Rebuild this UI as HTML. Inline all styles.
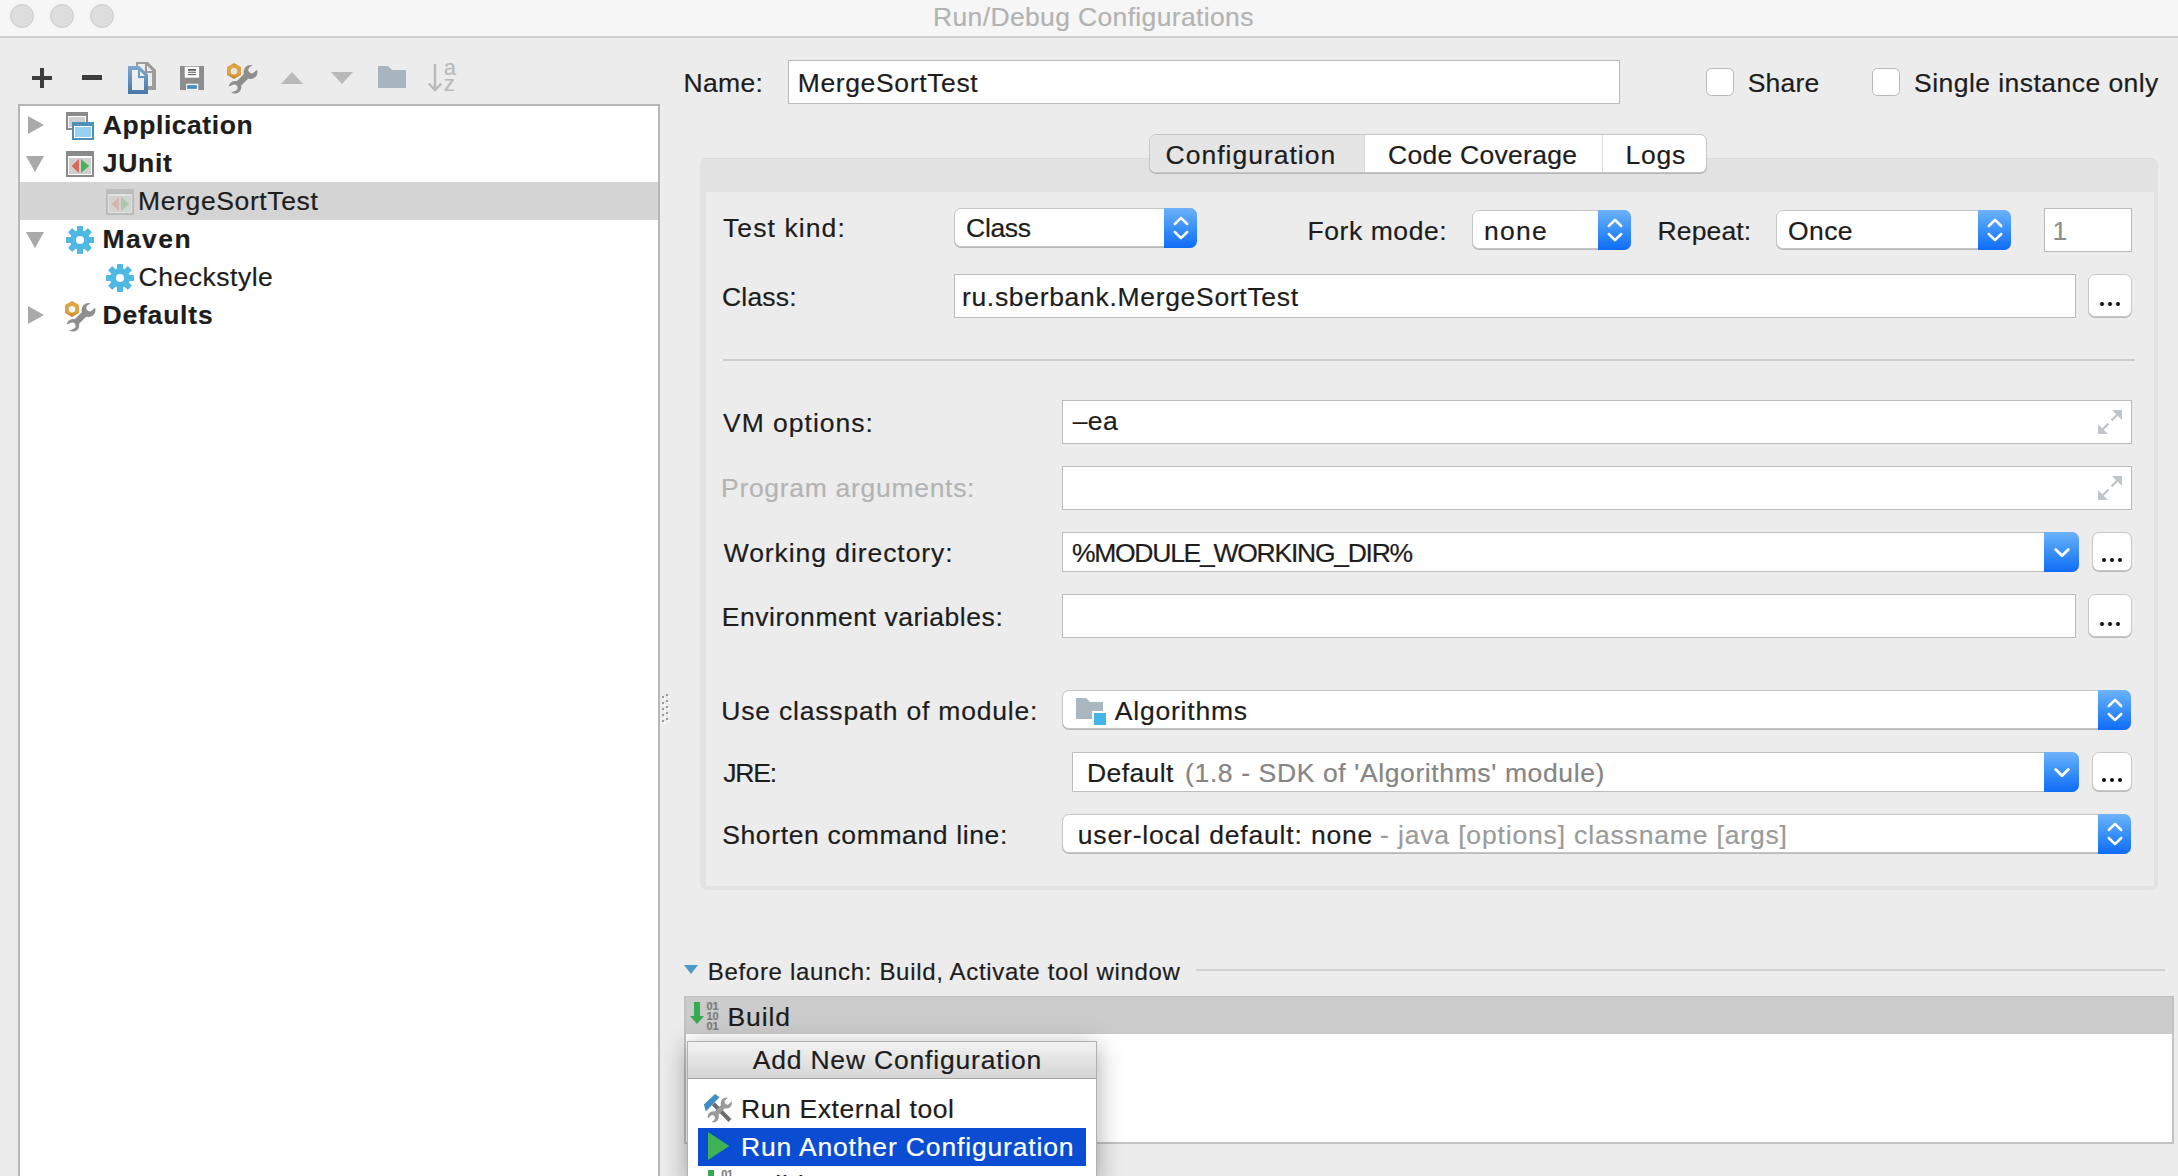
<!DOCTYPE html>
<html><head><meta charset="utf-8"><title>Run/Debug Configurations</title><style>
*{box-sizing:border-box}
html,body{margin:0;padding:0}
body{width:2178px;height:1176px;overflow:hidden;background:#ececec;font-family:"Liberation Sans",sans-serif;position:relative}
.a{position:absolute}
.t{position:absolute;white-space:pre;line-height:40px;height:40px;-webkit-text-stroke:0.2px currentColor}
.inp{position:absolute;background:#fff;border:1px solid #bbbbbb}
.cmb{position:absolute;background:#fff;border:1px solid #c6c6c6;border-radius:7px;box-shadow:0 1px 0 #b9b9b9}
.cbtn{position:absolute;right:-1px;top:-1px;bottom:-2px;border-radius:0 7px 7px 0;background:linear-gradient(#6db3fb,#3d94f9 45%,#0f6cf6)}
.btn{position:absolute;background:#fff;border:1px solid #c8c8c8;border-radius:7px;box-shadow:0 1px 0 #bbbbbb}
.chk{position:absolute;width:28px;height:28px;background:#fff;border:1px solid #b7b7b7;border-radius:5.500px}
svg{position:absolute;overflow:visible}
#root{position:absolute;left:0;top:0;width:2178px;height:1176px;overflow:hidden;background:#ececec}
</style></head><body>
<div id="root">
<div class="a" style="left:0;top:0;width:2178px;height:37px;background:#f6f6f6"></div>
<div class="a" style="left:0;top:36px;width:2178px;height:2px;background:#cfcfcf"></div>
<div class="a" style="left:10px;top:4px;width:24px;height:24px;border-radius:12px;background:#dddddd;border:1px solid #cdcdcd"></div>
<div class="a" style="left:50px;top:4px;width:24px;height:24px;border-radius:12px;background:#dddddd;border:1px solid #cdcdcd"></div>
<div class="a" style="left:90px;top:4px;width:24px;height:24px;border-radius:12px;background:#dddddd;border:1px solid #cdcdcd"></div>
<div class='t' style='left:933.00px;top:-3.0px;font-size:26.5px;font-weight:400;color:#b3b3b3;letter-spacing:0.354px;'>Run/Debug Configurations</div>
<svg style="left:32px;top:68px" width="20" height="20" viewBox="0 0 20 20"><path d="M8 0h4v8h8v4h-8v8H8v-8H0V8h8z" fill="#3c3c3c"/></svg>
<svg style="left:82px;top:75px" width="20" height="5" viewBox="0 0 20 5"><rect width="20" height="5" fill="#3c3c3c"/></svg>
<svg style="left:128px;top:62px" width="28" height="32" viewBox="0 0 28 32"><defs><linearGradient id="cg" x1="0" y1="0" x2="0" y2="1"><stop offset="0" stop-color="#7ea9ce"/><stop offset="1" stop-color="#4577a7"/></linearGradient></defs>
<path d="M8 0H20L28 8V28H8Z" fill="#9b9b9b"/><path d="M10 2H17V11H24V24H10Z" fill="#ececec"/><path d="M19 3.500L24.500 9H19Z" fill="#ececec"/>
<path d="M0 4H11.500L20 12.500V32H0Z" fill="url(#cg)"/><path d="M4 8H10V16H16V28H4Z" fill="#eeeeee"/><path d="M12 9L17 14H12Z" fill="#eeeeee"/></svg>
<svg style="left:180px;top:66px" width="24" height="24" viewBox="0 0 24 24"><rect width="24" height="24" fill="#8c8c8c"/><rect x="4.700" y="0.700" width="14.400" height="11" fill="#fbfbfb"/>
<rect x="8" y="3" width="8" height="1.700" fill="#555"/><rect x="8" y="5.700" width="8" height="1.100" fill="#666"/><rect x="8" y="8" width="8" height="1.100" fill="#666"/>
<rect x="6" y="17.700" width="12.300" height="6.300" fill="#efefef"/><rect x="7.100" y="19.200" width="9.700" height="3.600" fill="#3e8cc5"/></svg>
<svg style="left:226px;top:62px" width="32" height="32" viewBox="0 0 32 32"><defs><linearGradient id="ng1" x1="0" y1="0" x2="0" y2="1"><stop offset="0" stop-color="#c9913a"/><stop offset="0.150" stop-color="#dea545"/><stop offset="0.700" stop-color="#dba041"/><stop offset="1" stop-color="#b98428"/></linearGradient>
<mask id="wm1"><rect x="-2" y="-2" width="38" height="38" fill="#fff"/><g transform="translate(25.600 8) rotate(-40)" fill="#000"><rect x="0" y="-3.200" width="14" height="6.400"/><circle r="3.200"/></g><g transform="translate(8.400 25.800) rotate(158)" fill="#000"><rect x="0" y="-3.200" width="14" height="6.400"/><circle r="3.200"/></g></mask></defs>
<g mask="url(#wm1)" fill="#8e8e8e"><circle cx="24.500" cy="10" r="7"/><circle cx="9" cy="25.300" r="6.300"/><path d="M9 25.300L24.500 10" stroke="#8e8e8e" stroke-width="6.200"/></g>
<path d="M8 1L15 5V13L8 17L1 13V5Z" fill="url(#ng1)"/><circle cx="8" cy="9.200" r="3.300" fill="#e6e6e6"/></svg>
<svg style="left:281px;top:72px" width="22" height="12" viewBox="0 0 22 12"><path d="M0 12L11 0L22 12z" fill="#b9b9b9"/></svg>
<svg style="left:331px;top:72px" width="22" height="12" viewBox="0 0 22 12"><path d="M0 0L11 12L22 0z" fill="#b9b9b9"/></svg>
<svg style="left:378px;top:66px" width="28" height="22" viewBox="0 0 28 22"><path d="M0 0h10l4 4h14v18H0z" fill="#a7b5c1"/></svg>
<svg style="left:428px;top:64px" width="28" height="28" viewBox="0 0 28 28"><path d="M7 0v26M0.800 19.500l6.200 6.800l6.200 -6.800" fill="none" stroke="#bababa" stroke-width="2.400"/></svg>
<div class='t' style='left:443.80px;top:48.099999999999994px;font-size:22px;font-weight:400;color:#bababa;letter-spacing:-2.700px;'>a</div>
<div class='t' style='left:443.80px;top:64.1px;font-size:22px;font-weight:400;color:#bababa;letter-spacing:0.300px;'>z</div>
<div class="a" style="left:18px;top:104px;width:642px;height:1100px;background:#fff;border:2px solid #b7b7b7"></div>
<div class="a" style="left:20px;top:182px;width:638px;height:38px;background:#d4d4d4"></div>
<svg style="left:28px;top:116px" width="16" height="18" viewBox="0 0 16 18"><path d="M0 0L16 9L0 18z" fill="#a9a9a9"/></svg>
<svg style="left:26px;top:156px" width="18" height="16" viewBox="0 0 18 16"><path d="M0 0L18 0L9 16z" fill="#a9a9a9"/></svg>
<svg style="left:26px;top:232px" width="18" height="16" viewBox="0 0 18 16"><path d="M0 0L18 0L9 16z" fill="#a9a9a9"/></svg>
<svg style="left:28px;top:306px" width="16" height="18" viewBox="0 0 16 18"><path d="M0 0L16 9L0 18z" fill="#a9a9a9"/></svg>
<svg style="left:66px;top:112px" width="28" height="28" viewBox="0 0 28 28"><rect x="0" y="0" width="22" height="18" fill="#8a8a8a"/><rect x="2" y="4" width="18" height="12" fill="#fff"/><rect x="3" y="5" width="16" height="10" fill="#cfcfcf"/>
<rect x="6" y="10" width="22" height="18" fill="#4f90b8"/><rect x="8" y="14" width="18" height="12" fill="#fff"/><rect x="9" y="15" width="16" height="10" fill="#98d1f3"/></svg>
<svg style="left:66px;top:151px" width="28" height="26" viewBox="0 0 28 26"><rect x="0" y="0" width="28" height="26" fill="#8a8a8a"/><rect x="2" y="5" width="24" height="19" fill="#fff"/><rect x="3" y="7" width="22" height="16" fill="#cfcfcf"/>
<path d="M13 8L5.500 15L13 22z" fill="#d9685a"/><path d="M15 8L23 15L15 22z" fill="#45b25a"/></svg>
<svg style="left:106px;top:189px;opacity:.3" width="28" height="26" viewBox="0 0 28 26"><rect x="0" y="0" width="28" height="26" fill="#8a8a8a"/><rect x="2" y="5" width="24" height="19" fill="#fff"/><rect x="3" y="7" width="22" height="16" fill="#cfcfcf"/>
<path d="M13 8L5.500 15L13 22z" fill="#d9685a"/><path d="M15 8L23 15L15 22z" fill="#45b25a"/></svg>
<svg style="left:66px;top:226px" width="28" height="28" viewBox="0 0 28 28"><g fill="#4fb8e4"><circle cx="14" cy="14" r="10"/><rect x="11" y="0" width="6" height="28" rx="1" transform="rotate(0 14 14)"/><rect x="11" y="0" width="6" height="28" rx="1" transform="rotate(45 14 14)"/><rect x="11" y="0" width="6" height="28" rx="1" transform="rotate(90 14 14)"/><rect x="11" y="0" width="6" height="28" rx="1" transform="rotate(135 14 14)"/></g><circle cx="14" cy="14" r="4" fill="#fff"/></svg>
<svg style="left:106px;top:264px" width="28" height="28" viewBox="0 0 28 28"><g fill="#4fb8e4"><circle cx="14" cy="14" r="10"/><rect x="11" y="0" width="6" height="28" rx="1" transform="rotate(0 14 14)"/><rect x="11" y="0" width="6" height="28" rx="1" transform="rotate(45 14 14)"/><rect x="11" y="0" width="6" height="28" rx="1" transform="rotate(90 14 14)"/><rect x="11" y="0" width="6" height="28" rx="1" transform="rotate(135 14 14)"/></g><circle cx="14" cy="14" r="4" fill="#fff"/></svg>
<svg style="left:64px;top:300px" width="32" height="32" viewBox="0 0 32 32"><defs><linearGradient id="ng2" x1="0" y1="0" x2="0" y2="1"><stop offset="0" stop-color="#c9913a"/><stop offset="0.150" stop-color="#dea545"/><stop offset="0.700" stop-color="#dba041"/><stop offset="1" stop-color="#b98428"/></linearGradient>
<mask id="wm2"><rect x="-2" y="-2" width="38" height="38" fill="#fff"/><g transform="translate(25.600 8) rotate(-40)" fill="#000"><rect x="0" y="-3.200" width="14" height="6.400"/><circle r="3.200"/></g><g transform="translate(8.400 25.800) rotate(158)" fill="#000"><rect x="0" y="-3.200" width="14" height="6.400"/><circle r="3.200"/></g></mask></defs>
<g mask="url(#wm2)" fill="#8e8e8e"><circle cx="24.500" cy="10" r="7"/><circle cx="9" cy="25.300" r="6.300"/><path d="M9 25.300L24.500 10" stroke="#8e8e8e" stroke-width="6.200"/></g>
<path d="M8 1L15 5V13L8 17L1 13V5Z" fill="url(#ng2)"/><circle cx="8" cy="9.200" r="3.300" fill="#f4f4f4"/></svg>
<div class='t' style='left:102.80px;top:104.9px;font-size:26.5px;font-weight:700;color:#1d1d1d;letter-spacing:0.551px;'>Application</div>
<div class='t' style='left:102.80px;top:142.8px;font-size:26.5px;font-weight:700;color:#1d1d1d;letter-spacing:0.694px;'>JUnit</div>
<div class='t' style='left:138.10px;top:181.0px;font-size:26.5px;font-weight:400;color:#1d1d1d;letter-spacing:0.612px;'>MergeSortTest</div>
<div class='t' style='left:102.50px;top:218.9px;font-size:26.5px;font-weight:700;color:#1d1d1d;letter-spacing:1.403px;'>Maven</div>
<div class='t' style='left:138.50px;top:256.8px;font-size:26.5px;font-weight:400;color:#1d1d1d;letter-spacing:0.526px;'>Checkstyle</div>
<div class='t' style='left:102.50px;top:294.7px;font-size:26.5px;font-weight:700;color:#1d1d1d;letter-spacing:0.798px;'>Defaults</div>
<svg style="left:662px;top:694px" width="8" height="30" viewBox="0 0 8 30"><rect x="0" y="2" width="2" height="2" fill="#9c9c9c"/><rect x="2" y="4" width="2" height="2" fill="#f9f9f9"/><rect x="4" y="0" width="2" height="2" fill="#9c9c9c"/><rect x="6" y="2" width="2" height="2" fill="#f9f9f9"/><rect x="0" y="8" width="2" height="2" fill="#9c9c9c"/><rect x="2" y="10" width="2" height="2" fill="#f9f9f9"/><rect x="4" y="6" width="2" height="2" fill="#9c9c9c"/><rect x="6" y="8" width="2" height="2" fill="#f9f9f9"/><rect x="0" y="14" width="2" height="2" fill="#9c9c9c"/><rect x="2" y="16" width="2" height="2" fill="#f9f9f9"/><rect x="4" y="12" width="2" height="2" fill="#9c9c9c"/><rect x="6" y="14" width="2" height="2" fill="#f9f9f9"/><rect x="0" y="20" width="2" height="2" fill="#9c9c9c"/><rect x="2" y="22" width="2" height="2" fill="#f9f9f9"/><rect x="4" y="18" width="2" height="2" fill="#9c9c9c"/><rect x="6" y="20" width="2" height="2" fill="#f9f9f9"/><rect x="0" y="26" width="2" height="2" fill="#9c9c9c"/><rect x="2" y="28" width="2" height="2" fill="#f9f9f9"/><rect x="4" y="24" width="2" height="2" fill="#9c9c9c"/><rect x="6" y="26" width="2" height="2" fill="#f9f9f9"/></svg>
<div class='t' style='left:683.60px;top:62.5px;font-size:26.5px;font-weight:400;color:#1d1d1d;letter-spacing:0.303px;'>Name:</div>
<div class="inp" style="left:788px;top:60px;width:832px;height:44px"></div>
<div class='t' style='left:797.70px;top:62.5px;font-size:26.5px;font-weight:400;color:#1d1d1d;letter-spacing:0.637px;'>MergeSortTest</div>
<div class="chk" style="left:1706px;top:68px"></div>
<div class='t' style='left:1747.70px;top:62.599999999999994px;font-size:26.5px;font-weight:400;color:#1d1d1d;letter-spacing:0.206px;'>Share</div>
<div class="chk" style="left:1872px;top:68px"></div>
<div class='t' style='left:1914.10px;top:62.599999999999994px;font-size:26.5px;font-weight:400;color:#1d1d1d;letter-spacing:0.450px;'>Single instance only</div>
<div class="a" style="left:700px;top:158px;width:1458px;height:732px;background:#e2e2e2;border-top:1px solid #dbdbdb;border-radius:7px"></div>
<div class="a" style="left:706px;top:192px;width:1448px;height:694px;background:#ececec"></div>
<div class="a" style="left:1149px;top:134px;width:558px;height:39px;background:#fff;border:1px solid #c6c6c6;border-radius:7px;box-shadow:0 1px 0 #b6b6b6"></div>
<div class="a" style="left:1150px;top:135px;width:214px;height:37px;background:#e5e5e5;border-radius:6px 0 0 6px"></div>
<div class="a" style="left:1364px;top:135px;width:1px;height:37px;background:#dadada"></div>
<div class="a" style="left:1602px;top:135px;width:1px;height:37px;background:#dcdcdc"></div>
<div class='t' style='left:1165.60px;top:135.2px;font-size:26.5px;font-weight:400;color:#1d1d1d;letter-spacing:0.992px;'>Configuration</div>
<div class='t' style='left:1388.00px;top:135.2px;font-size:26.5px;font-weight:400;color:#1d1d1d;letter-spacing:0.277px;'>Code Coverage</div>
<div class='t' style='left:1625.40px;top:135.2px;font-size:26.5px;font-weight:400;color:#1d1d1d;letter-spacing:0.829px;'>Logs</div>
<div class='t' style='left:723.00px;top:208.2px;font-size:26.5px;font-weight:400;color:#1d1d1d;letter-spacing:1.091px;'>Test kind:</div>
<div class="cmb" style="left:954px;top:208px;width:243px;height:39px"><div class="cbtn" style="width:33px"><svg style="left:5.5px;top:-1.0px" width="22" height="42" viewBox="0 0 22 42"><path d="M4.800 17L11 10.800L17.200 17M4.800 25L11 31.200L17.200 25" fill="none" stroke="#fff" stroke-width="2.500" stroke-linecap="round" stroke-linejoin="round"/></svg></div></div>
<div class='t' style='left:966.10px;top:208.2px;font-size:26.5px;font-weight:400;color:#1d1d1d;letter-spacing:-0.353px;'>Class</div>
<div class='t' style='left:1307.50px;top:211.0px;font-size:26.5px;font-weight:400;color:#1d1d1d;letter-spacing:0.572px;'>Fork mode:</div>
<div class="cmb" style="left:1472px;top:210px;width:159px;height:39px"><div class="cbtn" style="width:33px"><svg style="left:5.5px;top:-1.0px" width="22" height="42" viewBox="0 0 22 42"><path d="M4.800 17L11 10.800L17.200 17M4.800 25L11 31.200L17.200 25" fill="none" stroke="#fff" stroke-width="2.500" stroke-linecap="round" stroke-linejoin="round"/></svg></div></div>
<div class='t' style='left:1484.10px;top:211.0px;font-size:26.5px;font-weight:400;color:#1d1d1d;letter-spacing:1.229px;'>none</div>
<div class='t' style='left:1657.60px;top:211.0px;font-size:26.5px;font-weight:400;color:#1d1d1d;letter-spacing:0.108px;'>Repeat:</div>
<div class="cmb" style="left:1776px;top:210px;width:235px;height:39px"><div class="cbtn" style="width:33px"><svg style="left:5.5px;top:-1.0px" width="22" height="42" viewBox="0 0 22 42"><path d="M4.800 17L11 10.800L17.200 17M4.800 25L11 31.200L17.200 25" fill="none" stroke="#fff" stroke-width="2.500" stroke-linecap="round" stroke-linejoin="round"/></svg></div></div>
<div class='t' style='left:1788.00px;top:210.6px;font-size:26.5px;font-weight:400;color:#1d1d1d;letter-spacing:0.400px;'>Once</div>
<div class="inp" style="left:2044px;top:208px;width:88px;height:44px"></div>
<div class='t' style='left:2052.40px;top:210.6px;font-size:26.5px;font-weight:400;color:#8e8e8e;letter-spacing:-2.400px;'>1</div>
<div class='t' style='left:722.00px;top:277.0px;font-size:26.5px;font-weight:400;color:#1d1d1d;letter-spacing:0.187px;'>Class:</div>
<div class="inp" style="left:954px;top:274px;width:1122px;height:44px"></div>
<div class='t' style='left:961.90px;top:277.0px;font-size:26.5px;font-weight:400;color:#1d1d1d;letter-spacing:0.689px;'>ru.sberbank.MergeSortTest</div>
<div class="btn" style="left:2088px;top:274px;width:44px;height:43px"></div><div class="a" style="left:2099.95px;top:301.85px;width:3.9px;height:3.9px;border-radius:1.95px;background:#111"></div><div class="a" style="left:2108.05px;top:301.85px;width:3.9px;height:3.9px;border-radius:1.95px;background:#111"></div><div class="a" style="left:2116.15px;top:301.85px;width:3.9px;height:3.9px;border-radius:1.95px;background:#111"></div>
<div class="a" style="left:723px;top:359px;width:1412px;height:2px;background:#cdcdcd"></div>
<div class='t' style='left:723.00px;top:402.6px;font-size:26.5px;font-weight:400;color:#1d1d1d;letter-spacing:1.004px;'>VM options:</div>
<div class="inp" style="left:1062px;top:400px;width:1070px;height:44px"></div>
<div class='t' style='left:1072.70px;top:401.0px;font-size:26.5px;font-weight:400;color:#1d1d1d;letter-spacing:0.362px;'>&#8211;ea</div>
<svg style="left:2098px;top:410px" width="24" height="24" viewBox="0 0 24 24"><path d="M13.600 10.400L20 4M10.400 13.600L4 20" fill="none" stroke="#c0c5c9" stroke-width="2.300"/><path d="M14 0h10v10zM0 14v10h10z" fill="#c0c5c9"/></svg>
<div class='t' style='left:721.00px;top:468.2px;font-size:26.5px;font-weight:400;color:#b4b4b4;letter-spacing:0.701px;'>Program arguments:</div>
<div class="inp" style="left:1062px;top:466px;width:1070px;height:44px"></div>
<svg style="left:2098px;top:476px" width="24" height="24" viewBox="0 0 24 24"><path d="M13.600 10.400L20 4M10.400 13.600L4 20" fill="none" stroke="#c0c5c9" stroke-width="2.300"/><path d="M14 0h10v10zM0 14v10h10z" fill="#c0c5c9"/></svg>
<div class='t' style='left:723.70px;top:532.5px;font-size:26.5px;font-weight:400;color:#1d1d1d;letter-spacing:0.936px;'>Working directory:</div>
<div class="cmb" style="left:1062px;top:532px;width:1017px;height:40px;border-radius:0 7px 7px 0;box-shadow:none;border-color:#bdbdbd"><div class="cbtn" style="width:35px;bottom:-1px"><svg style="left:-0.5px;top:0.0px" width="36" height="40" viewBox="0 0 36 40"><path d="M11.700 17.400L18 23.700L24.300 17.400" fill="none" stroke="#fff" stroke-width="2.800" stroke-linecap="round" stroke-linejoin="round"/></svg></div></div>
<div class='t' style='left:1071.90px;top:532.5px;font-size:26.5px;font-weight:400;color:#1d1d1d;letter-spacing:-1.258px;'>%MODULE_WORKING_DIR%</div>
<div class="btn" style="left:2092px;top:532px;width:40px;height:39px"></div><div class="a" style="left:2101.95px;top:557.85px;width:3.9px;height:3.9px;border-radius:1.95px;background:#111"></div><div class="a" style="left:2110.05px;top:557.85px;width:3.9px;height:3.9px;border-radius:1.95px;background:#111"></div><div class="a" style="left:2118.15px;top:557.85px;width:3.9px;height:3.9px;border-radius:1.95px;background:#111"></div>
<div class='t' style='left:721.70px;top:596.9px;font-size:26.5px;font-weight:400;color:#1d1d1d;letter-spacing:0.549px;'>Environment variables:</div>
<div class="inp" style="left:1062px;top:594px;width:1014px;height:44px"></div>
<div class="btn" style="left:2088px;top:594px;width:44px;height:43px"></div><div class="a" style="left:2099.95px;top:621.85px;width:3.9px;height:3.9px;border-radius:1.95px;background:#111"></div><div class="a" style="left:2108.05px;top:621.85px;width:3.9px;height:3.9px;border-radius:1.95px;background:#111"></div><div class="a" style="left:2116.15px;top:621.85px;width:3.9px;height:3.9px;border-radius:1.95px;background:#111"></div>
<div class='t' style='left:721.20px;top:690.7px;font-size:26.5px;font-weight:400;color:#1d1d1d;letter-spacing:0.814px;'>Use classpath of module:</div>
<div class="cmb" style="left:1062px;top:690px;width:1069px;height:39px"><div class="cbtn" style="width:33px"><svg style="left:5.5px;top:-1.0px" width="22" height="42" viewBox="0 0 22 42"><path d="M4.800 17L11 10.800L17.200 17M4.800 25L11 31.200L17.200 25" fill="none" stroke="#fff" stroke-width="2.500" stroke-linecap="round" stroke-linejoin="round"/></svg></div></div>
<svg style="left:1076px;top:698px" width="30" height="28" viewBox="0 0 30 28"><path d="M0 0h10l4 4h13v17H0z" fill="#a9b7c2"/><rect x="16" y="13" width="14" height="15" fill="#fff"/><rect x="18" y="15" width="12" height="12" fill="#45b4e6"/></svg>
<div class='t' style='left:1114.80px;top:690.7px;font-size:26.5px;font-weight:400;color:#1d1d1d;letter-spacing:0.786px;'>Algorithms</div>
<div class='t' style='left:723.20px;top:753.0px;font-size:26.5px;font-weight:400;color:#1d1d1d;letter-spacing:-1.188px;'>JRE:</div>
<div class="cmb" style="left:1072px;top:752px;width:1007px;height:40px;border-radius:0 7px 7px 0;box-shadow:none;border-color:#bdbdbd"><div class="cbtn" style="width:35px;bottom:-1px"><svg style="left:-0.5px;top:0.0px" width="36" height="40" viewBox="0 0 36 40"><path d="M11.700 17.400L18 23.700L24.300 17.400" fill="none" stroke="#fff" stroke-width="2.800" stroke-linecap="round" stroke-linejoin="round"/></svg></div></div>
<div class='t' style='left:1087.10px;top:753.0px;font-size:26.5px;font-weight:400;color:#1d1d1d;letter-spacing:0.383px;'>Default</div>
<div class='t' style='left:1185.10px;top:753.0px;font-size:26.5px;font-weight:400;color:#858585;letter-spacing:0.615px;'>(1.8 - SDK of 'Algorithms' module)</div>
<div class="btn" style="left:2092px;top:752px;width:40px;height:39px"></div><div class="a" style="left:2101.95px;top:777.85px;width:3.9px;height:3.9px;border-radius:1.95px;background:#111"></div><div class="a" style="left:2110.05px;top:777.85px;width:3.9px;height:3.9px;border-radius:1.95px;background:#111"></div><div class="a" style="left:2118.15px;top:777.85px;width:3.9px;height:3.9px;border-radius:1.95px;background:#111"></div>
<div class='t' style='left:722.20px;top:814.6px;font-size:26.5px;font-weight:400;color:#1d1d1d;letter-spacing:0.633px;'>Shorten command line:</div>
<div class="cmb" style="left:1062px;top:814px;width:1069px;height:39px"><div class="cbtn" style="width:33px"><svg style="left:5.5px;top:-1.0px" width="22" height="42" viewBox="0 0 22 42"><path d="M4.800 17L11 10.800L17.200 17M4.800 25L11 31.200L17.200 25" fill="none" stroke="#fff" stroke-width="2.500" stroke-linecap="round" stroke-linejoin="round"/></svg></div></div>
<div class='t' style='left:1077.80px;top:814.6px;font-size:26.5px;font-weight:400;color:#1d1d1d;letter-spacing:0.829px;'>user-local default: none</div>
<div class='t' style='left:1380.10px;top:814.6px;font-size:26.5px;font-weight:400;color:#9b9b9b;letter-spacing:0.839px;'>- java [options] classname [args]</div>
<svg style="left:684px;top:965px" width="14" height="10" viewBox="0 0 14 10"><path d="M0 0h14L7 9z" fill="#4a9ac8"/></svg>
<div class='t' style='left:707.80px;top:952.0px;font-size:24px;font-weight:400;color:#1d1d1d;letter-spacing:0.679px;'>Before launch: Build, Activate tool window</div>
<div class="a" style="left:1196px;top:969px;width:969px;height:2px;background:#d2d2d2"></div>
<div class="a" style="left:684px;top:996px;width:1490px;height:148px;background:#fff;border:2px solid #c2c2c2"></div>
<div class="a" style="left:686px;top:997px;width:1486px;height:37px;background:#cbcbcb"></div>
<svg style="left:690px;top:1002px" width="14" height="22" viewBox="0 0 14 22"><path d="M4 0h6v14h4l-7 8l-7 -8h4z" fill="#34ab50"/></svg>
<div class='t' style='left:706.60px;top:986.2px;font-size:11px;font-weight:700;color:#7c7c7c;letter-spacing:-0.3px;'>01</div>
<div class='t' style='left:706.60px;top:996.2px;font-size:11px;font-weight:700;color:#7c7c7c;letter-spacing:-0.3px;'>10</div>
<div class='t' style='left:706.60px;top:1006.2px;font-size:11px;font-weight:700;color:#7c7c7c;letter-spacing:-0.3px;'>01</div>
<div class='t' style='left:727.40px;top:996.7px;font-size:26.5px;font-weight:400;color:#1d1d1d;letter-spacing:0.928px;'>Build</div>
<div class="a" style="left:687px;top:1041px;width:410px;height:141px;background:#fff;border:1px solid #b0b0b0;box-shadow:0 6px 24px rgba(0,0,0,.35)"></div>
<div class="a" style="left:688px;top:1042px;width:408px;height:37px;background:linear-gradient(#f3f3f3,#d5d5d5);border-bottom:1px solid #a2a2a2"></div>
<div class='t' style='left:752.70px;top:1040.2px;font-size:26.5px;font-weight:400;color:#1d1d1d;letter-spacing:0.806px;'>Add New Configuration</div>
<svg style="left:703px;top:1093px" width="30" height="30" viewBox="0 0 30 30"><defs><mask id="xm"><rect x="-2" y="-2" width="36" height="36" fill="#fff"/><g transform="translate(24.200 9) rotate(-45)" fill="#000"><rect x="0" y="-2.600" width="12" height="5.200"/><circle r="2.600"/></g><g transform="translate(9.400 24.800) rotate(135)" fill="#000"><rect x="0" y="-2.600" width="12" height="5.200"/><circle r="2.600"/></g></mask></defs>
<path d="M10.300 10.800L27 27.400" stroke="#6e6e6e" stroke-width="4.200"/><path d="M12.100 1L16.500 4.300L2.800 18.400L0.900 11.500Z" fill="#3f8fc6"/>
<g mask="url(#xm)" fill="#9a9a9a"><circle cx="23.300" cy="10" r="5.600"/><circle cx="10.300" cy="23.800" r="5.600"/><path d="M10.300 23.800L23.300 10" stroke="#9a9a9a" stroke-width="5"/></g></svg>
<div class='t' style='left:741.00px;top:1088.7px;font-size:26.5px;font-weight:400;color:#1d1d1d;letter-spacing:0.607px;'>Run External tool</div>
<div class="a" style="left:698px;top:1128px;width:388px;height:38px;background:#0a4dd3"></div>
<svg style="left:708px;top:1132px" width="22" height="28" viewBox="0 0 22 28"><path d="M0 0L21.300 14L0 28z" fill="#3db356"/></svg>
<div class='t' style='left:741.00px;top:1127.1px;font-size:26.5px;font-weight:400;color:#fff;letter-spacing:0.844px;'>Run Another Configuration</div>
<svg style="left:704px;top:1170px" width="14" height="22" viewBox="0 0 14 22"><path d="M4 0h6v14h4l-7 8l-7 -8h4z" fill="#34ab50"/></svg>
<div class='t' style='left:721.20px;top:1154.2px;font-size:11px;font-weight:700;color:#7c7c7c;letter-spacing:-0.3px;'>01</div>
<div class='t' style='left:741.00px;top:1164.6px;font-size:26.5px;font-weight:400;color:#1d1d1d;letter-spacing:0.928px;'>Build</div>
</div>
</body></html>
